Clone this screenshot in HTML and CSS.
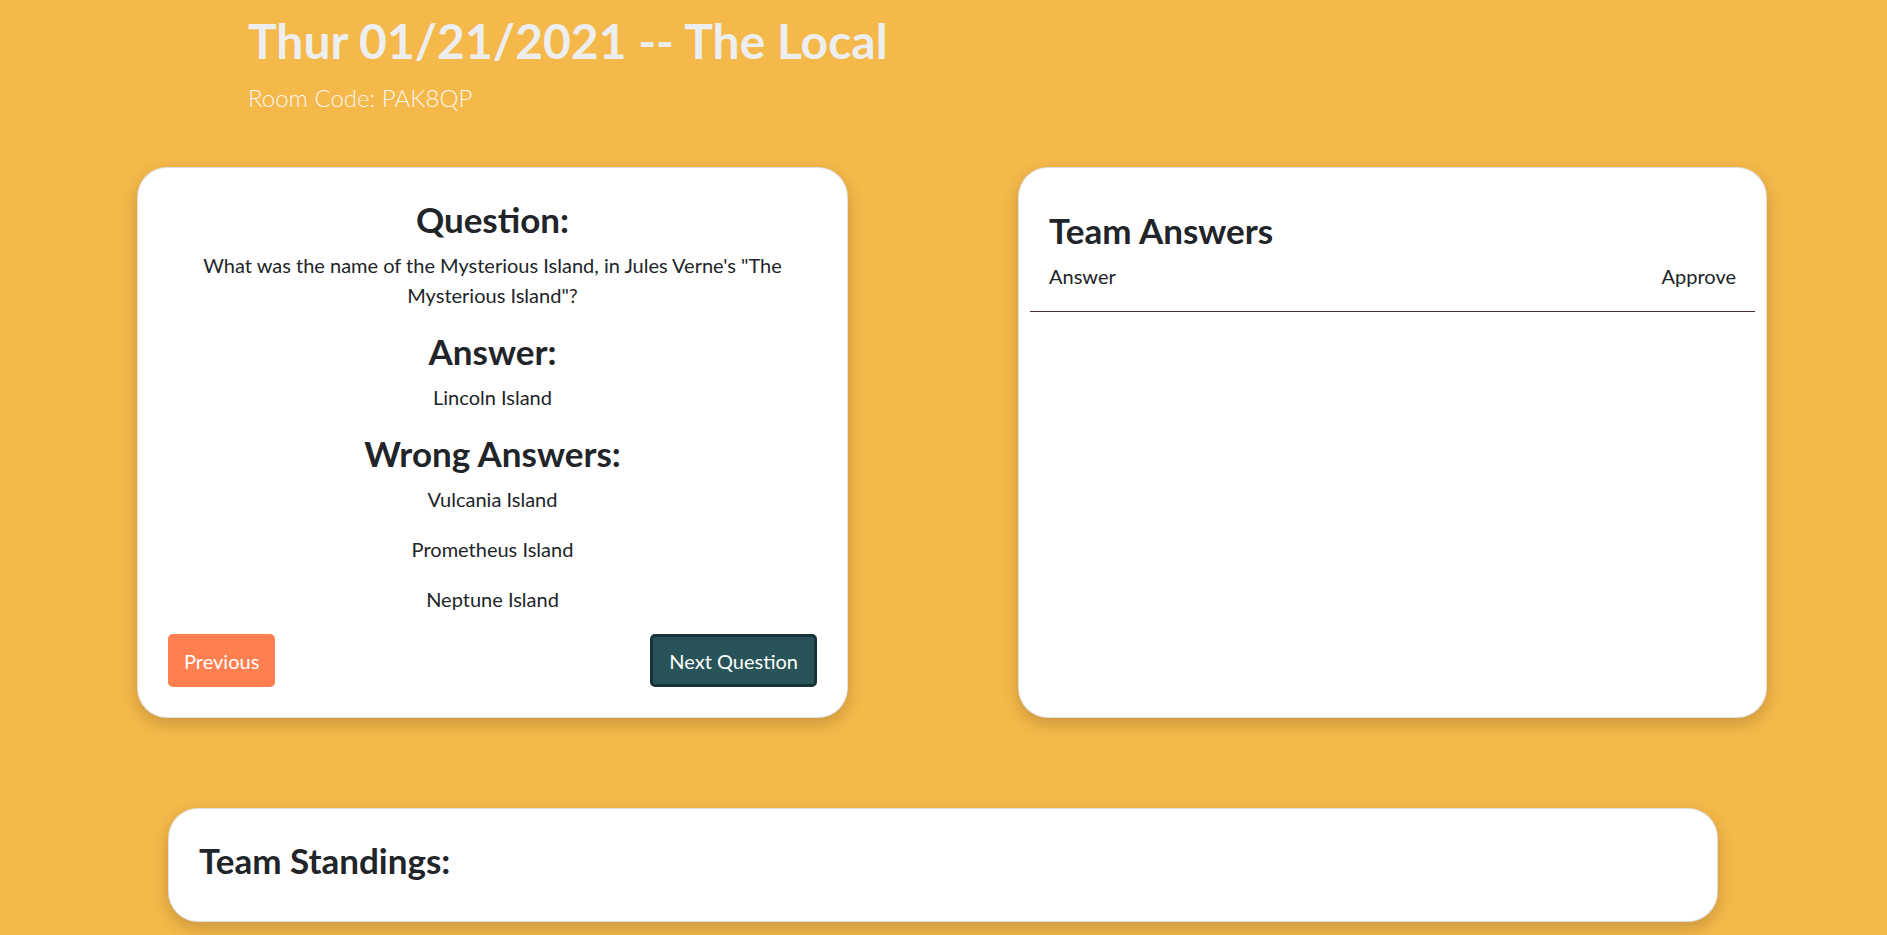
FILE: index.html
```html
<!DOCTYPE html>
<html lang="en">
<head>
<meta charset="utf-8">
<title>Thur 01/21/2021 -- The Local</title>
<link rel="stylesheet" href="styles.css">
</head>
<body>
  <header class="page-header">
    <h1 class="page-title">Thur 01/21/2021 -- The Local</h1>
    <p class="room-code">Room Code: PAK8QP</p>
  </header>

  <main class="board">
    <section class="card question-card">
      <h3 class="section-title">Question:</h3>
      <p class="text">What was the name of the Mysterious Island, in Jules Verne's "The Mysterious Island"?</p>
      <h3 class="section-title">Answer:</h3>
      <p class="text">Lincoln Island</p>
      <h3 class="section-title">Wrong Answers:</h3>
      <p class="text">Vulcania Island</p>
      <p class="text">Prometheus Island</p>
      <p class="text">Neptune Island</p>
      <div class="actions">
        <button class="btn btn-prev" type="button">Previous</button>
        <button class="btn btn-next" type="button">Next Question</button>
      </div>
    </section>

    <section class="card answers-card">
      <h3 class="section-title answers-title">Team Answers</h3>
      <table class="answers-table">
        <thead>
          <tr>
            <th class="col-answer">Answer</th>
            <th class="col-approve">Approve</th>
          </tr>
        </thead>
        <tbody></tbody>
      </table>
    </section>
  </main>

  <section class="card standings-card">
    <h3 class="section-title">Team Standings:</h3>
  </section>
</body>
</html>
```

FILE: styles.css
```css
* {
  box-sizing: border-box;
}

html, body {
  margin: 0;
  padding: 0;
}

body {
  background: #f5b84a;
  font-family: "Lato", "Open Sans", sans-serif;
  color: #212529;
  font-size: 20px;
  line-height: 1.5;
  overflow: hidden;
  height: 935px;
}

.page-header {
  padding: 12px 0 0 248px;
}

.page-title {
  margin: 0 0 11px;
  font-size: 48px;
  line-height: 58px;
  font-weight: 700;
  color: #eceef0;
}

.room-code {
  margin: 0;
  font-size: 24px;
  line-height: 34px;
  font-weight: 300;
  color: #fbf6ee;
}

.board {
  display: flex;
  align-items: stretch;
  gap: 170px;
  margin: 52px 0 0 137px;
}

.card {
  background: #ffffff;
  border: 1px solid rgba(0, 0, 0, 0.125);
  border-radius: 30px;
  box-shadow: 0 6px 16px rgba(0, 0, 0, 0.18);
}

.section-title {
  margin: 0 0 10px;
  font-size: 35px;
  line-height: 42px;
  font-weight: 700;
  color: #212529;
}

.question-card {
  width: 711px;
  padding: 30px;
  text-align: center;
}

.text {
  margin: 0 0 20px;
  font-size: 20px;
  line-height: 30px;
}

.actions {
  display: flex;
  justify-content: space-between;
  align-items: center;
}

.btn {
  font-family: inherit;
  font-size: 20px;
  line-height: 30px;
  color: #ffffff;
  border-radius: 5px;
  cursor: pointer;
}

.btn-prev {
  background: #ff7f50;
  border: 0;
  padding: 11.5px 16px;
}

.btn-next {
  background: #285459;
  border: 3px solid #18343a;
  padding: 8.5px 16px;
}

.answers-card {
  width: 749px;
  padding: 41px 11px 30px;
}

.answers-title {
  padding: 0 19px;
}

.answers-table {
  width: 100%;
  border-collapse: collapse;
}

.answers-table th {
  font-weight: 400;
  font-size: 20px;
  line-height: 30px;
  padding: 0 19px 20px;
  border-bottom: 1px solid #4a2c38;
}

.col-answer {
  text-align: left;
}

.col-approve {
  text-align: right;
}

.standings-card {
  width: 1550px;
  margin: 90px 0 0 168px;
  padding: 30px;
}
```
